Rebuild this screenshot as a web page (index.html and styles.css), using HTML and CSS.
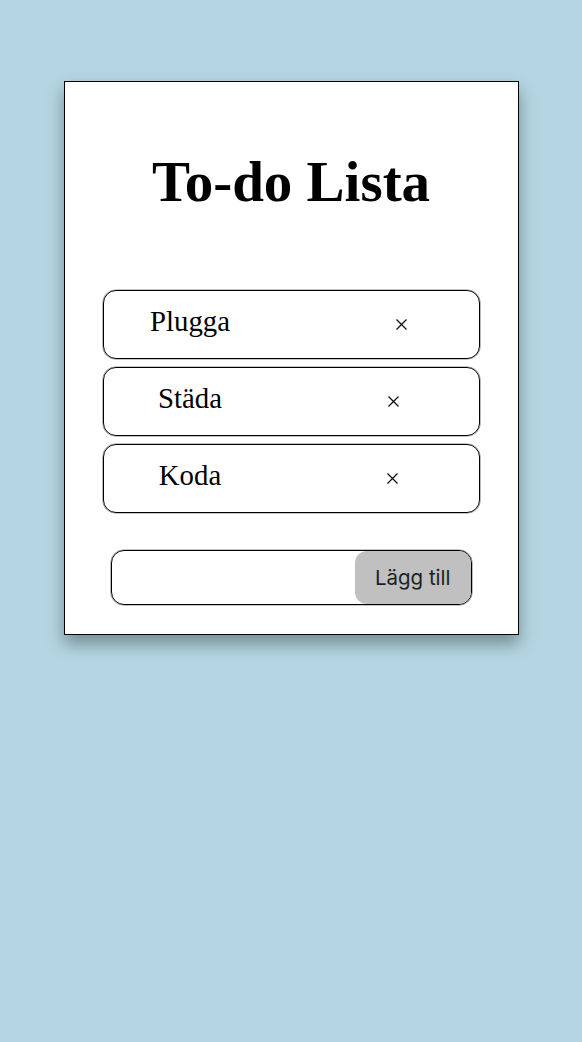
FILE: index.html
```html
<!DOCTYPE html>
<html lang="sv">
<head>
<meta charset="utf-8">
<title>To-do Lista</title>
<link rel="stylesheet" href="styles.css">
</head>
<body>
<main class="card">
  <h1 class="title">To-do Lista</h1>
  <ul class="todo-list">
    <li class="todo-item"><span class="todo-text">Plugga</span><button class="remove" aria-label="Ta bort"><svg width="11" height="11" viewBox="0 0 11 11"><path d="M0.5 0.5 L10.5 10.5 M10.5 0.5 L0.5 10.5" stroke="#111" stroke-width="1.3" fill="none"/></svg></button></li>
    <li class="todo-item"><span class="todo-text">Städa</span><button class="remove" aria-label="Ta bort"><svg width="11" height="11" viewBox="0 0 11 11"><path d="M0.5 0.5 L10.5 10.5 M10.5 0.5 L0.5 10.5" stroke="#111" stroke-width="1.3" fill="none"/></svg></button></li>
    <li class="todo-item"><span class="todo-text">Koda</span><button class="remove" aria-label="Ta bort"><svg width="11" height="11" viewBox="0 0 11 11"><path d="M0.5 0.5 L10.5 10.5 M10.5 0.5 L0.5 10.5" stroke="#111" stroke-width="1.3" fill="none"/></svg></button></li>
  </ul>
  <form class="add-form">
    <input class="add-input" type="text">
    <button class="add-button" type="button">Lägg till</button>
  </form>
</main>
</body>
</html>
```

FILE: styles.css
```css
html, body {
  margin: 0;
  padding: 0;
}

body {
  background: #b4d6e2;
  font-family: "Liberation Serif", "Times New Roman", serif;
  min-height: 1042px;
}

.card {
  box-sizing: border-box;
  width: 455px;
  margin: 81px auto 0;
  padding: 68px 38px 29px;
  background: #fff;
  border: 1.5px solid #000;
  box-shadow: 0 9px 16px rgba(0, 0, 0, 0.35);
}

.title {
  margin: 0;
  font-size: 57px;
  line-height: 64px;
  font-weight: bold;
  text-align: center;
}

.todo-list {
  list-style: none;
  margin: 76px 0 0;
  padding: 0;
  display: flex;
  flex-direction: column;
  gap: 8px;
}

.todo-item {
  box-sizing: border-box;
  height: 69px;
  border: 1px solid #000;
  box-shadow: 0 0 0 0.6px rgba(0, 0, 0, 0.45);
  border-radius: 13px;
  display: flex;
  justify-content: center;
  align-items: center;
}

.todo-text {
  font-size: 28.8px;
  padding-bottom: 7px;
}

.remove {
  display: flex;
  align-items: center;
  justify-content: center;
  margin: 0 25px 0 166px;
  padding: 0;
  border: none;
  background: transparent;
  width: 11px;
  height: 11px;
  cursor: pointer;
}

.add-form {
  box-sizing: border-box;
  margin: 37px 8px 0;
  height: 55px;
  border: 1px solid #000;
  box-shadow: 0 0 0 0.6px rgba(0, 0, 0, 0.45);
  border-radius: 13px;
  display: flex;
  overflow: hidden;
}

.add-input {
  flex: 1;
  min-width: 0;
  border: none;
  outline: none;
  background: transparent;
  padding: 0 12px;
  font-size: 18px;
}

.add-button {
  border: none;
  background: #c0c0c0;
  border-radius: 12px;
  padding: 0 20px;
  font-family: Inter, "Liberation Sans", sans-serif;
  font-size: 20.5px;
  color: #1e1e1e;
  cursor: pointer;
}
```
